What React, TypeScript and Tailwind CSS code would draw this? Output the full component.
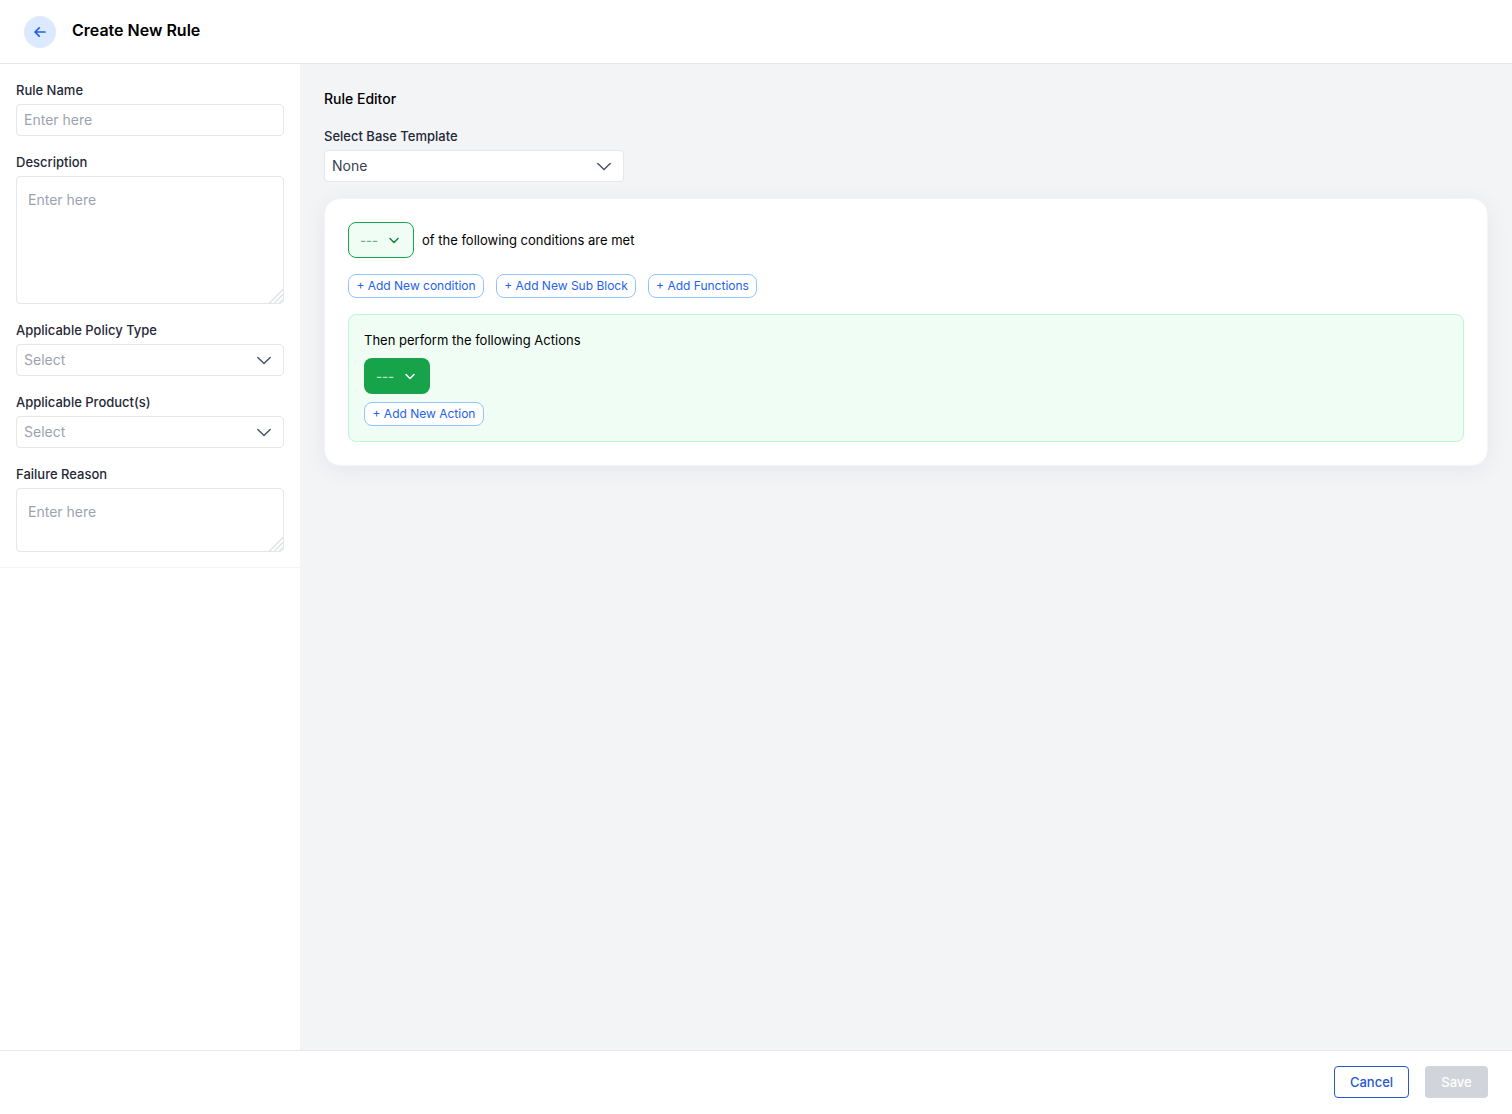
import type { ReactNode } from "react";

function Chevron() {
  return (
    <svg className="text-[#4b5563]" width="16" height="16" viewBox="0 0 16 16" fill="none" stroke="currentColor" strokeWidth="1.5" strokeLinecap="round" strokeLinejoin="round">
      <path d="M1.8 5.5L8 11.5L14.2 5.5" />
    </svg>
  );
}

function SmallChevron() {
  return (
    <svg width="12" height="12" viewBox="0 0 12 12" fill="none" stroke="currentColor" strokeWidth="1.5" strokeLinecap="round" strokeLinejoin="round">
      <path d="M2 4.5l4 4 4-4" />
    </svg>
  );
}

function Field({ label, children }: { label: string; children: ReactNode }) {
  return (
    <div className="flex flex-col gap-1">
      <label className="text-[13px] leading-5 font-medium text-[#1f2937]">{label}</label>
      {children}
    </div>
  );
}

function Select({ value, filled }: { value: string; filled?: boolean }) {
  return (
    <div className="flex h-8 items-center justify-between rounded-[4px] border border-[#e5e7eb] bg-white pr-[11px] pl-[7px] text-sm">
      <span className={filled ? "text-[#374151]" : "text-[#9ca3af]"}>{value}</span>
      <Chevron />
    </div>
  );
}

function TextArea({ height }: { height: string }) {
  return (
    <div className={`relative rounded-[4px] border border-[#e5e7eb] bg-white px-[11px] pt-[13px] text-sm leading-5 text-[#9ca3af] ${height}`}>
      Enter here
      <svg className="absolute -right-px -bottom-px text-[#e0e3e8]" width="16" height="16" viewBox="0 0 16 16" fill="none" stroke="currentColor" strokeWidth="1.5">
        <path d="M1 15.5L15.5 1M6 15.5L15.5 6M11 15.5L15.5 11" />
      </svg>
    </div>
  );
}

function AddButton({ children, className }: { children: ReactNode; className: string }) {
  return (
    <button className={`flex h-6 items-center justify-center rounded-lg border border-[#93c5fd] bg-white text-xs whitespace-nowrap text-[#2563eb] ${className}`}>
      {children}
    </button>
  );
}

export default function App() {
  return (
    <div className="flex h-[1114px] w-[1512px] flex-col overflow-hidden bg-white font-['Inter',sans-serif] text-black">
      <header className="flex h-16 shrink-0 items-center gap-4 border-b border-[#e5e7eb] px-6">
        <button className="flex size-8 items-center justify-center rounded-full bg-[#dbeafe] text-[#2b5fdc]">
          <svg width="16" height="16" viewBox="0 0 16 16" fill="none" stroke="currentColor" strokeWidth="1.7" strokeLinecap="round" strokeLinejoin="round">
            <path d="M13 8H3M7.2 3.8L3 8l4.2 4.2" />
          </svg>
        </button>
        <h1 className="-mt-[3px] text-base font-semibold">Create New Rule</h1>
      </header>

      <div className="flex min-h-0 flex-1">
        <aside className="w-[300px] shrink-0">
          <div className="flex flex-col gap-4 border-b border-[#f3f4f6] p-4 pb-[15px]">
            <Field label="Rule Name">
              <div className="flex h-8 items-center rounded-[4px] border border-[#e5e7eb] px-[7px] text-sm text-[#9ca3af]">Enter here</div>
            </Field>
            <Field label="Description">
              <TextArea height="h-32" />
            </Field>
            <Field label="Applicable Policy Type">
              <Select value="Select" />
            </Field>
            <Field label="Applicable Product(s)">
              <Select value="Select" />
            </Field>
            <Field label="Failure Reason">
              <TextArea height="h-16" />
            </Field>
          </div>
        </aside>

        <main className="flex-1 bg-[#f3f4f6] px-6 pt-[25px]">
          <h2 className="text-sm leading-5 font-medium">Rule Editor</h2>
          <div className="mt-[17px] w-[300px]">
            <Field label="Select Base Template">
              <Select value="None" filled />
            </Field>
          </div>

          <section className="mt-4 rounded-2xl border border-[#f3f4f6] bg-white p-[23px] shadow-[0_4px_24px_rgba(17,17,51,0.06)]">
            <div className="flex items-center gap-2 text-[13px]">
              <button className="flex h-9 w-[66px] items-center justify-between rounded-lg border border-[#16a34a] bg-[#f0fdf4] pr-[13px] pl-[11px] text-[#15803d]">
                <span className="pt-px font-medium opacity-60">---</span>
                <SmallChevron />
              </button>
              <span className="leading-5">of the following conditions are met</span>
            </div>
            <div className="mt-4 flex gap-3">
              <AddButton className="w-[136px]">+ Add New condition</AddButton>
              <AddButton className="w-[140px]">+ Add New Sub Block</AddButton>
              <AddButton className="w-[109px]">+ Add Functions</AddButton>
            </div>
            <div className="mt-4 h-32 rounded-lg border border-[#bbf7d0] bg-[#f0fdf4] px-[15px] pt-[15px]">
              <p className="text-[13px] leading-5">Then perform the following Actions</p>
              <button className="mt-2 flex h-9 w-[66px] items-center justify-between rounded-lg bg-[#16a34a] pr-3.5 pl-3 text-[13px] text-white">
                <span className="pt-px font-medium opacity-70">---</span>
                <SmallChevron />
              </button>
              <AddButton className="mt-2 w-[120px]">+ Add New Action</AddButton>
            </div>
          </section>
        </main>
      </div>

      <footer className="flex h-16 shrink-0 items-start justify-end gap-4 border-t border-[#e5e7eb] px-6 pt-[15px]">
        <button className="h-8 w-[75px] rounded-[4px] border border-[#2458cf] pt-px text-[13px] font-medium text-[#2458cf]">Cancel</button>
        <button className="h-8 w-[63px] rounded-[4px] bg-[#d1d5db] pt-px text-[13px] font-medium text-white">Save</button>
      </footer>
    </div>
  );
}
